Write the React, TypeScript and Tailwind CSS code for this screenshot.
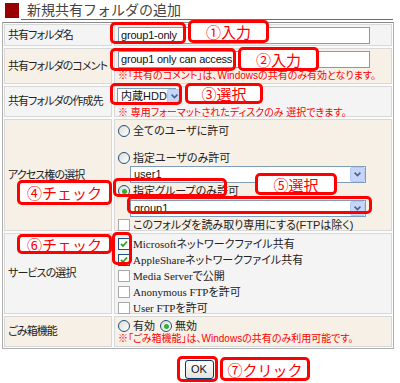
import React from 'react';

const Radio = ({ checked = false }: { checked?: boolean }) => (
  <span className="inline-flex w-[12px] h-[12px] shrink-0 items-center justify-center rounded-full border border-[#1c5180] bg-gradient-to-br from-[#dcdcd6] to-white">
    {checked && <span className="w-[5px] h-[5px] rounded-full bg-[#31b131]" />}
  </span>
);

const Check = ({ checked = false }: { checked?: boolean }) => (
  <span
    className={`inline-flex w-[12px] h-[12px] shrink-0 items-center justify-center border bg-white ${
      checked ? 'border-[#1c5180]' : 'border-[#a8a8a8]'
    }`}
  >
    {checked && (
      <svg width="8" height="8" viewBox="0 0 8 8">
        <path d="M1 3.8 L3 6 L7 1.5" stroke="#21a121" strokeWidth="1.8" fill="none" />
      </svg>
    )}
  </span>
);

const Select = ({ value, className }: { value: string; className: string }) => (
  <div className={`flex items-center h-[17px] border border-[#7f9db9] bg-white whitespace-nowrap ${className}`}>
    <span className="flex-1 pl-[3px] text-[11px] leading-none text-[#111]">{value}</span>
    <span className="w-[15px] h-[15px] shrink-0 flex items-center justify-center bg-[#c5d5fc] border border-[#b7c9f1] rounded-[2px]">
      <svg width="7" height="5" viewBox="0 0 7 5">
        <path d="M0.6 0.6 L3.5 3.6 L6.4 0.6" stroke="#4d6185" strokeWidth="1.6" fill="none" />
      </svg>
    </span>
  </div>
);

const TextBox = ({ value }: { value: string }) => (
  <div className="ml-[3px] w-[252px] h-[17px] flex items-center border border-[#7f9db9] bg-white pl-[2px] whitespace-nowrap font-['Liberation_Sans',sans-serif] text-[11px] tracking-[-0.2px] leading-none text-[#111]">
    {value}
  </div>
);

const Callout = ({ className, children }: { className: string; children: React.ReactNode }) => (
  <div
    className={`absolute flex items-center justify-center whitespace-nowrap rounded-[5px] border-[3px] border-[#ff0000] bg-white font-['Noto_Sans_CJK_JP',sans-serif] text-[15px] leading-none text-[#ff0000] [font-feature-settings:normal] ${className}`}
  >
    {children}
  </div>
);

const Ring = ({ className }: { className: string }) => (
  <div className={`absolute rounded-[5px] border-[3px] border-[#ff0000] ${className}`} />
);

const Label = ({ children, bg }: { children: React.ReactNode; bg: string }) => (
  <div className={`w-[108px] shrink-0 flex items-center pl-[3px] whitespace-nowrap overflow-hidden border border-[#d8d8d8] text-[11px] tracking-[-0.9px] text-[#222] ${bg}`}>
    {children}
  </div>
);

export default function App() {
  const gray = 'bg-[#f4f4f4]';
  const beige = 'bg-[#f6f0e6]';

  return (
    <div className="relative w-[400px] h-[383px] bg-white overflow-hidden font-['Liberation_Sans','Noto_Sans_CJK_JP',sans-serif] [font-feature-settings:'palt']">
      {/* Header */}
      <div className="flex items-start h-[22px]">
        <div className="ml-[5px] mt-[3px] w-[14px] h-[15px] bg-[#990000]" />
        <div className="ml-[2px] mr-[7px] flex-1 h-[20px] border-b border-[#b84a4a] pl-[6px] font-['Noto_Sans_CJK_JP',sans-serif] text-[14px] leading-[19px] text-[#444] [font-feature-settings:normal]">
          新規共有フォルダの追加
        </div>
      </div>

      {/* Form table */}
      <div className="ml-[2px] w-[392px] border border-[#b0b0b0] border-t-[#8a8a8a] p-[1px] flex flex-col gap-[2px] bg-[#fbfbfb] whitespace-nowrap">
        {/* Row 1 */}
        <div className="flex gap-[2px] h-[22px]">
          <Label bg={gray}>共有フォルダ名</Label>
          <div className={`flex-1 flex items-center border border-[#d8d8d8] ${gray}`}>
            <TextBox value="group1-only" />
          </div>
        </div>

        {/* Row 2 */}
        <div className="flex gap-[2px] h-[36px]">
          <Label bg={beige}>共有フォルダのコメント</Label>
          <div className={`flex-1 flex flex-col pt-[2px] border border-[#d8d8d8] ${beige}`}>
            <TextBox value="group1 only can access" />
            <div className="ml-[3px] mt-[2px] text-[10px] leading-[11px] text-[#ff0000]">
              ※「共有のコメント」は、Windowsの共有のみ有効となります。
            </div>
          </div>
        </div>

        {/* Row 3 */}
        <div className="flex gap-[2px] h-[31px]">
          <Label bg={gray}>共有フォルダの作成先</Label>
          <div className={`flex-1 flex flex-col pt-[1px] border border-[#d8d8d8] ${gray}`}>
            <Select value="内蔵HDD" className="ml-[2px] w-[59px]" />
            <div className="ml-[3px] mt-[2px] text-[10px] leading-[11px] text-[#ff0000]">
              ※ 専用フォーマットされたディスクのみ 選択できます。
            </div>
          </div>
        </div>

        {/* Row 4 */}
        <div className="flex gap-[2px] h-[112px]">
          <Label bg={beige}>アクセス権の選択</Label>
          <div className={`flex-1 flex flex-col pt-[4px] pl-[3px] border border-[#d8d8d8] text-[11px] leading-[14px] text-[#222] ${beige}`}>
            <div className="flex items-center gap-[3px] h-[14px]">
              <Radio />
              <span>全てのユーザに許可</span>
            </div>
            <div className="flex items-center gap-[3px] h-[14px] mt-[13px]">
              <Radio />
              <span>指定ユーザのみ許可</span>
            </div>
            <Select value="user1" className="ml-[12px] w-[236px] mt-[1px]" />
            <div className="flex items-center gap-[3px] h-[14px] mt-[1px]">
              <Radio checked />
              <span>指定グループのみ許可</span>
            </div>
            <Select value="group1" className="ml-[12px] w-[236px] mt-[2px]" />
            <div className="flex items-center gap-[3px] h-[14px] mt-[1px]">
              <Check />
              <span>このフォルダを読み取り専用にする(FTPは除く)</span>
            </div>
          </div>
        </div>

        {/* Row 5 */}
        <div className="flex gap-[2px] h-[81px]">
          <Label bg={gray}>サービスの選択</Label>
          <div className={`flex-1 flex flex-col pt-[3px] pl-[3px] gap-[2px] border border-[#d8d8d8] font-['Liberation_Serif','Noto_Sans_CJK_JP',serif] text-[11px] leading-[14px] text-[#222] ${gray}`}>
            <div className="flex items-center gap-[3px] h-[14px]">
              <Check checked />
              <span>Microsoftネットワークファイル共有</span>
            </div>
            <div className="flex items-center gap-[3px] h-[14px]">
              <Check checked />
              <span>AppleShareネットワークファイル共有</span>
            </div>
            <div className="flex items-center gap-[3px] h-[14px]">
              <Check />
              <span>Media Serverで公開</span>
            </div>
            <div className="flex items-center gap-[3px] h-[14px]">
              <Check />
              <span>Anonymous FTPを許可</span>
            </div>
            <div className="flex items-center gap-[3px] h-[14px]">
              <Check />
              <span>User FTPを許可</span>
            </div>
          </div>
        </div>

        {/* Row 6 */}
        <div className="flex gap-[2px] h-[31px]">
          <Label bg={beige}>ごみ箱機能</Label>
          <div className={`flex-1 flex flex-col pt-[2px] pl-[3px] border border-[#d8d8d8] text-[11px] leading-[14px] text-[#222] ${beige}`}>
            <div className="flex items-center gap-[3px] h-[14px]">
              <Radio />
              <span className="mr-[2px]">有効</span>
              <Radio checked />
              <span>無効</span>
            </div>
            <div className="text-[10px] leading-[12px] text-[#ff0000]">
              ※「ごみ箱機能」は、Windowsの共有のみ利用可能です。
            </div>
          </div>
        </div>
      </div>

      {/* OK button */}
      <div className="flex justify-center mt-[11px] pr-[2px]">
        <button className="w-[29px] h-[19px] rounded-[3px] border border-[#003c74] bg-gradient-to-b from-white to-[#e3e3db] text-[11px] leading-none text-[#111]">
          OK
        </button>
      </div>

      {/* Annotations */}
      <Ring className="left-[110px] top-[22px] w-[76px] h-[22px]" />
      <Callout className="left-[188px] top-[20px] w-[81px] h-[23px]">①入力</Callout>

      <Ring className="left-[110px] top-[48px] w-[126px] h-[23px]" />
      <Callout className="left-[238px] top-[47px] w-[81px] h-[24px]">②入力</Callout>

      <Ring className="left-[110px] top-[83px] w-[72px] h-[22px]" />
      <Callout className="left-[185px] top-[83px] w-[78px] h-[21px]">③選択</Callout>

      <Ring className="left-[113px] top-[178px] w-[114px] h-[19px]" />
      <Callout className="left-[17px] top-[180px] w-[95px] h-[25px]">④チェック</Callout>

      <Ring className="left-[127px] top-[196px] w-[245px] h-[18px]" />
      <Callout className="left-[255px] top-[173px] w-[82px] h-[22px]">⑤選択</Callout>

      <Ring className="left-[112px] top-[232px] w-[20px] h-[33px]" />
      <Callout className="left-[17px] top-[234px] w-[95px] h-[20px]">⑥チェック</Callout>

      <Ring className="left-[177px] top-[356px] w-[41px] h-[26px]" />
      <Callout className="left-[220px] top-[357px] w-[90px] h-[24px]">⑦クリック</Callout>
    </div>
  );
}
